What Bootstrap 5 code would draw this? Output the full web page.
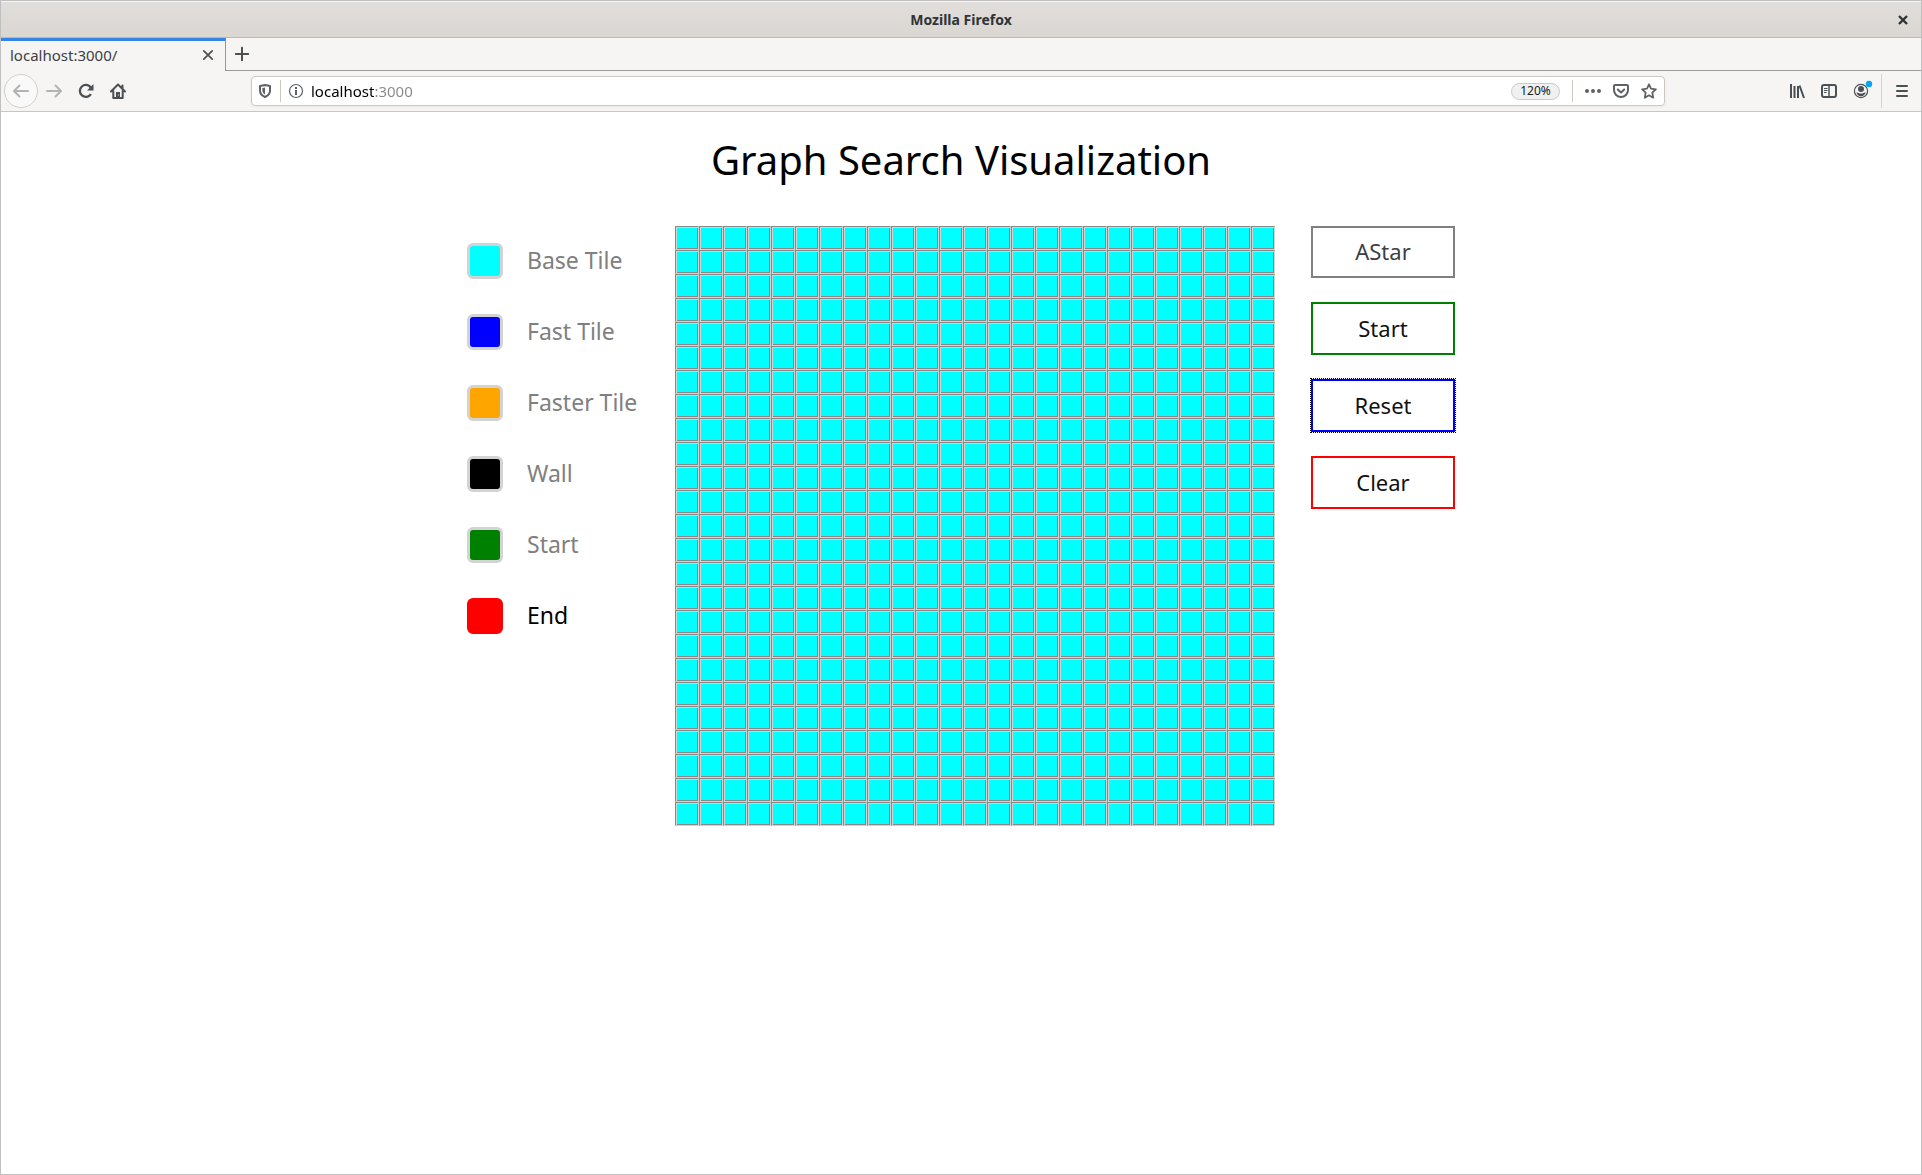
<!DOCTYPE html>
<html lang="en">
<head>
<meta charset="utf-8">
<meta name="viewport" content="width=device-width, initial-scale=1">
<title>Mozilla Firefox</title>
<link href="https://cdn.jsdelivr.net/npm/bootstrap@5.3.0/dist/css/bootstrap.min.css" rel="stylesheet">
<style>
body { font-family: "Noto Sans", sans-serif; color: #000; }
.win { min-height: 100vh; border: 1px solid #c0c0c0; }
.titlebar { height: 37px; background: linear-gradient(#e1dedb, #dad6d2); border-top: 1px solid #f6f5f4; border-bottom: 1px solid #bfb8b1; color: #2e3436; font-size: 14px; line-height: 20px; }
.side { flex: 1 1 0; }
.plain { border: 0; background: none; padding: 0; color: #4a5053; display: inline-flex; align-items: center; justify-content: center; }
.tabstrip { height: 33px; background: #f6f5f4; }
.tab-on { width: 225px; border-top: 3px solid #3584e4; border-right: 1px solid #999; padding: 0 9px 2px; font-size: 15px; line-height: 20px; color: #3c4143; }
.tab-rest { border-bottom: 1px solid #999; padding-left: 8px; }
.toolbar { height: 41px; background: #f6f5f4; border-bottom: 1px solid #c9c5c1; padding: 0 3px; }
.tool { width: 32px; height: 32px; }
.faded { color: #b2b4b4; }
.back { width: 34px; height: 34px; border: 1px solid #d2d0ce; border-radius: 50%; background: #faf9f9; }
.urlbar { height: 30px; margin-left: 117px; margin-right: 116px; background: #fff; border: 1px solid #cdc7c2; border-radius: 4px; box-shadow: 0 1px 3px #0000000d; padding: 0 1px 0 2px; }
.urlbar .plain { width: 22px; height: 28px; color: #5f6264; }
.urlbar .page-act { width: 28px; }
.vline { width: 1px; height: 22px; background: #cdc7c2; }
.addr { border: 0; outline: 0; padding: 0; font-size: 15px; line-height: 20px; background: linear-gradient(90deg, #000 63px, #888 63px) text; -webkit-background-clip: text; -webkit-text-fill-color: transparent; }
.urlbar .zoomlvl { width: 49px; height: 17px; border: 1px solid #c9c9c9; border-radius: 9px; background: #f0f0f0; color: #222; font-size: 12px; line-height: 14px; margin-right: 12px; }
.urlbar .vline-gap { margin-right: 6px; }
.headline { font-size: 40px; line-height: 48px; font-weight: 400; margin: 24px 0 42px; }
.board-row { gap: 36px; }
.legend-list { width: 172px; padding-top: 17px; gap: 35px; }
.legend-item { height: 36px; font-size: 23px; line-height: 35px; gap: 24px; color: gray; white-space: nowrap; }
.swatch { appearance: none; flex: none; width: 36px; height: 36px; margin: 0; border: 3px solid lightgray; border-radius: 6px; background: var(--tile); }
.swatch:checked { border-color: var(--tile); }
.swatch:checked + span { color: #000; }
.tiles { display: grid; grid-template-columns: repeat(25, 24px); grid-auto-rows: 24px; }
.tile { background: #0ff; border: 1px solid #888; border-right-color: #d3d3d3; border-bottom-color: #d3d3d3; box-shadow: inset 1px 1px #d3d3d3, inset -1px -1px #888; }
.acts { width: 144px; gap: 24px; }
.act { height: 53px; border: 2px solid var(--line); background: #fff; color: #111; border-radius: 0; font-size: 22px; line-height: 30px; padding: 0 0 2px; text-align: center; text-align-last: center; appearance: none; }
.act-pick { height: 52px; color: #3a4043; }
.act-focus { outline: 1px dotted #000; }
svg { display: block; fill: none; stroke: currentColor; stroke-width: 2; stroke-linecap: round; stroke-linejoin: round; }
.solid { fill: currentColor; stroke: none; }
</style>
</head>
<body>
<div class="win d-flex flex-column">
  <header>
    <div class="titlebar d-flex align-items-center">
      <div class="side px-1"></div>
      <strong>Mozilla Firefox</strong>
      <div class="side d-flex justify-content-end px-1"><button class="plain p-1 me-1" aria-label="Close window"><svg width="12" height="12" viewBox="0 0 12 12" style="color:#2e3436"><path stroke-linecap="butt" stroke-width="2.4" d="M2 2l8 8M10 2l-8 8"/></svg></button></div>
    </div>
    <div class="tabstrip d-flex">
      <div class="tab-on d-flex align-items-center justify-content-between"><span>localhost:3000/</span>
        <button class="plain" aria-label="Close tab"><svg width="16" height="16" viewBox="0 0 16 16"><path stroke-width="1.7" d="M3.8 3.8l8.4 8.4M12.2 3.8l-8.4 8.4"/></svg></button></div>
      <div class="tab-rest flex-fill d-flex align-items-center"><button class="plain" aria-label="New tab"><svg width="16" height="16" viewBox="0 0 16 16"><path d="M8 1.8v12.4M1.8 8h12.4"/></svg></button></div>
    </div>
    <nav class="toolbar d-flex align-items-center">
      <button class="plain faded back" aria-label="Back"><svg width="18" height="16" viewBox="0 0 18 16"><path d="M16 8H2M7.500 2.500L2 8l5.500 5.500"/></svg></button>
      <button class="plain faded tool" aria-label="Forward"><svg width="18" height="16" viewBox="0 0 18 16"><path d="M2 8h14M10.500 2.500L16 8l-5.500 5.500"/></svg></button>
      <button class="plain tool" aria-label="Reload"><svg width="16" height="16" viewBox="0 0 16 16"><path stroke-width="2.300" stroke-linecap="butt" d="M12.800 4.500A6 6 0 1 0 12.900 11.200"/><path class="solid" d="M15.500 1v6.500H9z"/></svg></button>
      <button class="plain tool" aria-label="Home"><svg width="16" height="16" viewBox="0 0 16 16"><path d="M1 8.500L8 1.500l7 7M3.300 8v7h9.400V8M12.500 2.500v3"/><path class="solid" d="M6 9h4v6H6z"/><path stroke="#f6f5f4" stroke-width="1" d="M8.500 12v.1"/></svg></button>
      <div class="urlbar flex-fill d-flex align-items-center">
        <button class="plain" aria-label="Tracking protection"><svg width="14" height="16" viewBox="0 0 14 16"><path d="M7 2L12 3v4.500c0 3-2 5.300-5 6.500-3-1.200-5-3.500-5-6.500V3z"/><path class="solid" d="M7 4.500v7c-1.500-.8-2.600-2.100-2.600-4V5z"/></svg></button>
        <span class="vline mx-1"></span>
        <button class="plain" aria-label="Site information"><svg width="16" height="16" viewBox="0 0 16 16"><circle cx="8" cy="8" r="6.500" stroke-width="1.200"/><path stroke-linecap="butt" d="M8 7v5M8 4v2"/></svg></button>
        <input class="addr flex-fill ms-1" type="text" value="localhost:3000" aria-label="Address">
        <button class="plain zoomlvl">120%</button>
        <span class="vline vline-gap"></span>
        <button class="plain page-act" aria-label="Page actions"><svg width="16" height="16" viewBox="0 0 16 16"><g class="solid"><circle cx="2" cy="8" r="2"/><circle cx="8" cy="8" r="2"/><circle cx="14" cy="8" r="2"/></g></svg></button>
        <button class="plain page-act" aria-label="Save to Pocket"><svg width="16" height="16" viewBox="0 0 16 16"><path d="M2 2h12a1 1 0 0 1 1 1v4a7 7 0 0 1-14 0V3a1 1 0 0 1 1-1zM4.800 6.500L8 9.500l3.200-3"/></svg></button>
        <button class="plain page-act" aria-label="Bookmark"><svg width="16" height="16" viewBox="0 0 16 16"><path stroke-width="1.800" d="M8 1.300l2 4.400 4.900.6-3.600 3.400.9 5L8 12.300l-4.200 2.400.9-5L1.100 6.300 6 5.700z"/></svg></button>
      </div>
      <button class="plain tool" aria-label="Library"><svg width="16" height="16" viewBox="0 0 16 16"><path stroke-linecap="butt" d="M2 1v14M5.500 3v12M9 3v12M10.500 2.500L15 15"/></svg></button>
      <button class="plain tool" aria-label="Sidebars"><svg width="16" height="16" viewBox="0 0 16 16"><rect x="1" y="2" width="14" height="12" rx="2"/><path stroke-width="1.500" stroke-linecap="butt" d="M8 2v12"/><path stroke-width="1" stroke-linecap="butt" d="M3 5.500h3.500M3 7.500h3.500M3 9.500h2.500"/></svg></button>
      <button class="plain tool" aria-label="Account"><svg class="overflow-visible" width="16" height="16" viewBox="0 0 16 16"><circle cx="8" cy="8" r="6.600" stroke-width="1.200"/><circle class="solid" cx="8" cy="6" r="3"/><path class="solid" d="M3.500 9.500c1.500-.5 2 1 4.500 1s3-1.500 4.500-1c-.3 2-2 3.700-4.500 3.700s-4.200-1.700-4.500-3.700z"/><circle cx="16" cy="1" r="3.200" style="fill:#00a8f5;stroke:none"/></svg></button>
      <span class="vline ms-1 opacity-75" style="height:34px"></span>
      <button class="plain tool ms-1" aria-label="Open menu"><svg width="16" height="16" viewBox="0 0 16 16"><path d="M3 3h10M3 8h10M3 13h10"/></svg></button>
    </nav>
  </header>
  <main class="flex-fill bg-white">
    <h1 class="headline text-center">Graph Search Visualization</h1>
    <div class="board-row d-flex justify-content-center align-items-start">
      <div class="legend-list d-flex flex-column">
        <label class="legend-item d-flex"><input class="swatch" type="radio" name="tile" style="--tile:cyan"><span>Base Tile</span></label>
        <label class="legend-item d-flex"><input class="swatch" type="radio" name="tile" style="--tile:blue"><span>Fast Tile</span></label>
        <label class="legend-item d-flex"><input class="swatch" type="radio" name="tile" style="--tile:orange"><span>Faster Tile</span></label>
        <label class="legend-item d-flex"><input class="swatch" type="radio" name="tile" style="--tile:black"><span>Wall</span></label>
        <label class="legend-item d-flex"><input class="swatch" type="radio" name="tile" style="--tile:green"><span>Start</span></label>
        <label class="legend-item d-flex"><input class="swatch" type="radio" name="tile" style="--tile:red" checked><span>End</span></label>
      </div>
      <div class="tiles" id="tiles"></div>
      <div class="acts d-flex flex-column">
        <select class="act act-pick" style="--line:gray" aria-label="Algorithm"><option>AStar</option></select>
        <button class="act" style="--line:green">Start</button>
        <button class="act act-focus" style="--line:blue">Reset</button>
        <button class="act" style="--line:red">Clear</button>
      </div>
    </div>
  </main>
</div>
<script src="https://cdn.jsdelivr.net/npm/bootstrap@5.3.0/dist/js/bootstrap.bundle.min.js"></script>
<script>
const tiles = document.getElementById('tiles');
for (let i = 0; i < 25 * 25; i++) {
  const t = document.createElement('div');
  t.className = 'tile';
  tiles.append(t);
}
</script>
</body>
</html>
